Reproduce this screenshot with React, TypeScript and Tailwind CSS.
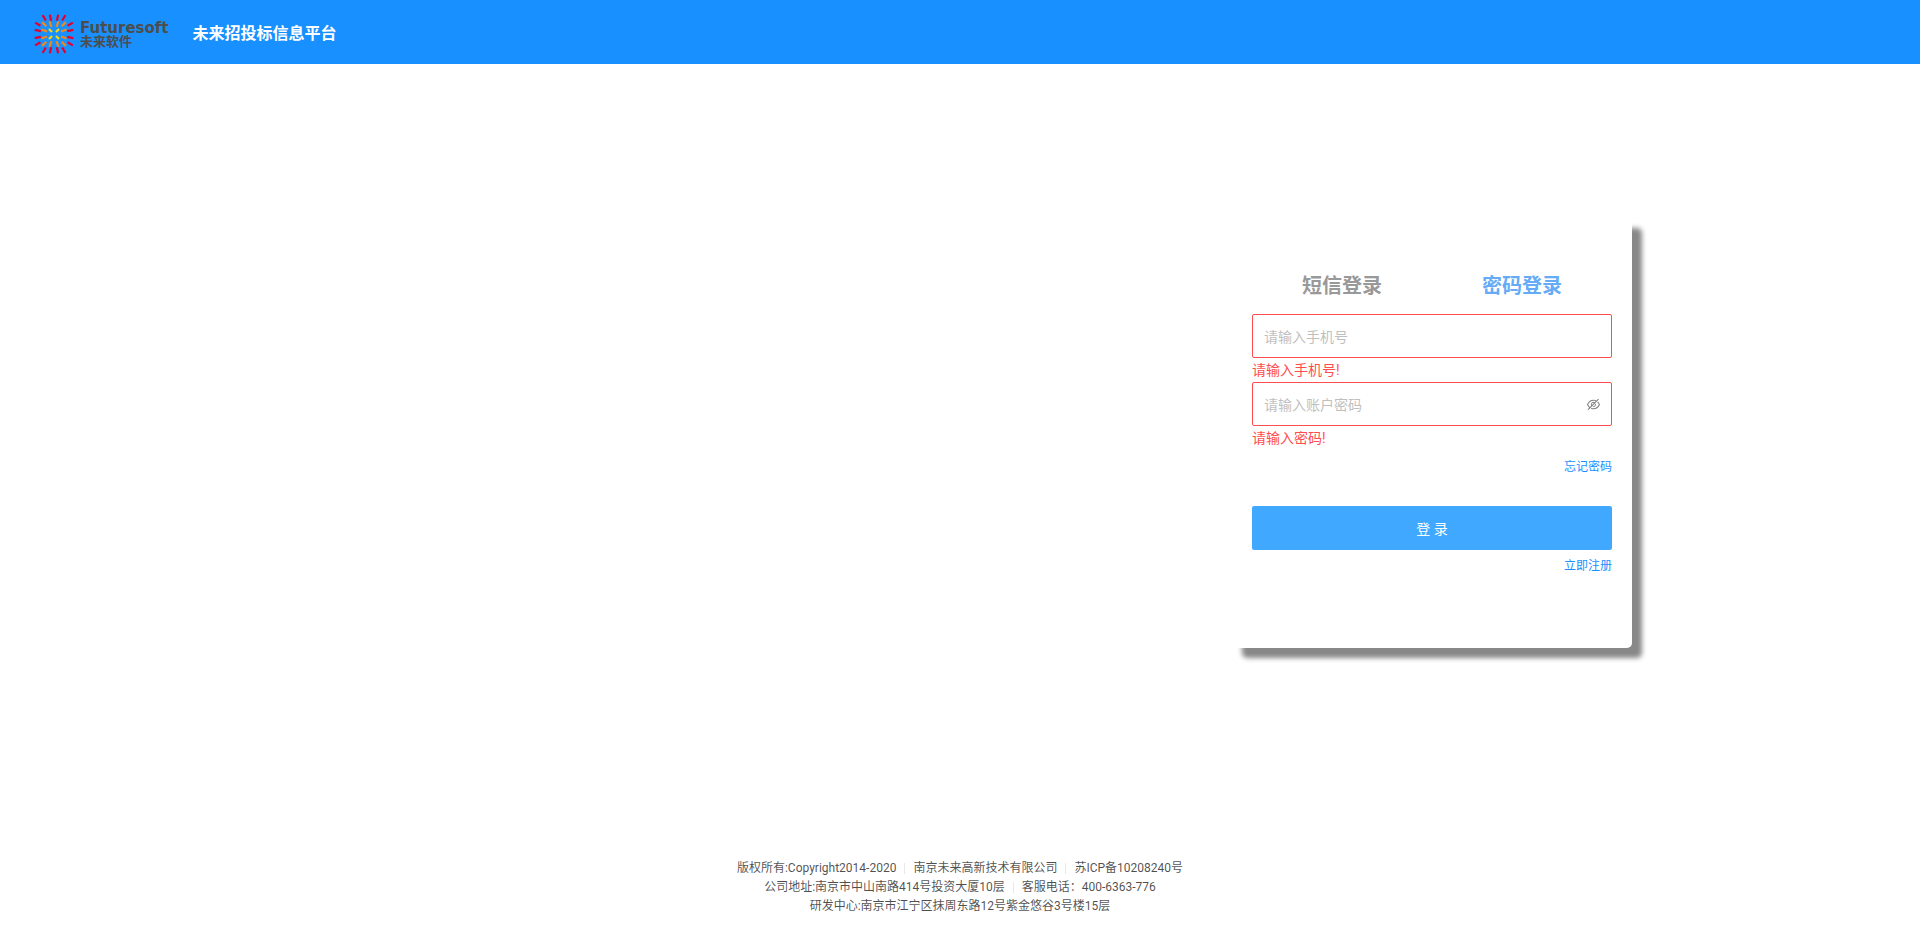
import { useState } from "react";
import { AiOutlineEye, AiOutlineEyeInvisible } from "react-icons/ai";

const OFFSETS = [-16.2, -9.8, -3.5, 3.5, 9.8, 16.2];
const RING_COLORS = ["#ffd800", "#f08a1c", "#e6002d"];
const RING_HALF_LENGTHS = [2.2, 2.9, 3.1];

function Sunburst() {
  const rays = OFFSETS.flatMap((y, row) =>
    OFFSETS.map((x, col) => {
      const ring = Math.max(Math.abs(row - 2.5), Math.abs(col - 2.5)) - 0.5;
      const corner = Math.abs(x) === 16.2 && Math.abs(y) === 16.2;
      const len = Math.hypot(x, y);
      const half = RING_HALF_LENGTHS[ring];
      const dx = (x / len) * half;
      const dy = (y / len) * half;
      return corner ? null : (
        <line
          key={`${row}-${col}`}
          x1={x - dx}
          y1={y - dy}
          x2={x + dx}
          y2={y + dy}
          stroke={RING_COLORS[ring]}
        />
      );
    })
  );
  return (
    <svg
      viewBox="-20 -20 40 40"
      className="size-10 shrink-0"
      strokeWidth="2.2"
      aria-hidden="true"
    >
      {rays}
    </svg>
  );
}

function Header() {
  return (
    <header className="flex h-16 items-center bg-[#1890ff] pt-1 pl-[34px]">
      <a href="#" className="flex items-center gap-[6px] text-[#4d4d4d]">
        <Sunburst />
        <span className="flex flex-col font-bold">
          <span className="font-['DejaVu_Sans',sans-serif] text-[15px] leading-[14px]">
            Futuresoft
          </span>
          <span className="font-['Liberation_Sans','Noto_Sans_CJK_SC',sans-serif] text-[13px] leading-[13px]">
            未来软件
          </span>
        </span>
      </a>
      <h1 className="ml-6 text-base font-bold text-white">未来招投标信息平台</h1>
    </header>
  );
}

const inputClass =
  "h-11 w-full rounded-[2px] border border-[#ff4d4f] bg-white pt-[2px] pl-[11px] text-sm text-black/65 outline-none placeholder:text-[#bfbfbf]";

function LoginCard() {
  const [tab, setTab] = useState<"sms" | "password">("password");
  const [visible, setVisible] = useState(false);
  const tabClass = (active: boolean) =>
    active ? "flex-1 text-[#66abf5]" : "flex-1 text-[#999999]";

  return (
    <form
      className="w-[400px] rounded-[5px] bg-white px-5 pt-10 pb-[72px] shadow-[10px_10px_5px_#888888]"
      onSubmit={(e) => e.preventDefault()}
    >
      <div className="flex h-14 items-center text-xl font-bold">
        <button type="button" className={tabClass(tab === "sms")} onClick={() => setTab("sms")}>
          短信登录
        </button>
        <button
          type="button"
          className={tabClass(tab === "password")}
          onClick={() => setTab("password")}
        >
          密码登录
        </button>
      </div>

      <input
        type="tel"
        aria-label="手机号"
        aria-describedby="phone-error"
        placeholder="请输入手机号"
        className={inputClass}
      />
      <p id="phone-error" className="text-sm leading-6 text-[#ff4d4f]">
        请输入手机号!
      </p>

      <div className="relative">
        <input
          type={visible ? "text" : "password"}
          aria-label="账户密码"
          aria-describedby="password-error"
          placeholder="请输入账户密码"
          className={inputClass}
        />
        <button
          type="button"
          aria-label="显示密码"
          onClick={() => setVisible(!visible)}
          className="absolute inset-y-0 right-[11px] flex items-center text-[15px] text-black/50"
        >
          {visible ? <AiOutlineEye /> : <AiOutlineEyeInvisible />}
        </button>
      </div>
      <p id="password-error" className="text-sm leading-6 text-[#ff4d4f]">
        请输入密码!
      </p>

      <div className="flex h-14 justify-end pt-[6px] text-xs leading-[22px] text-[#1890ff]">
        <a href="#">忘记密码</a>
      </div>
      <button
        type="submit"
        className="h-11 w-full rounded-[2px] bg-[#40a9ff] pt-[2px] text-sm text-white"
      >
        登 录
      </button>
      <div className="flex justify-end pt-[6px] text-xs leading-5 text-[#1890ff]">
        <a href="#">立即注册</a>
      </div>
    </form>
  );
}

const FOOTER_LINES = [
  ["版权所有:Copyright2014-2020", "南京未来高新技术有限公司", "苏ICP备10208240号"],
  ["公司地址:南京市中山南路414号投资大厦10层", "客服电话：400-6363-776"],
  ["研发中心:南京市江宁区抹周东路12号紫金悠谷3号楼15层"],
];

function Footer() {
  return (
    <footer className="pb-[22px] text-xs leading-[19px] text-black/70">
      {FOOTER_LINES.map((parts) => (
        <p key={parts[0]} className="flex items-center justify-center">
          {parts.map((part, i) => (
            <span
              key={part}
              className={
                i > 0
                  ? "flex items-center before:mx-2 before:h-[11px] before:w-px before:bg-[#e8e8e8]"
                  : "flex items-center"
              }
            >
              {part}
            </span>
          ))}
        </p>
      ))}
    </footer>
  );
}

export default function App() {
  return (
    <div className="flex min-h-screen flex-col bg-white font-['Roboto','Noto_Sans_CJK_SC',sans-serif]">
      <Header />
      <main className="flex flex-1 items-start justify-end pt-[154px] pr-[15%] pb-12">
        <LoginCard />
      </main>
      <Footer />
    </div>
  );
}
